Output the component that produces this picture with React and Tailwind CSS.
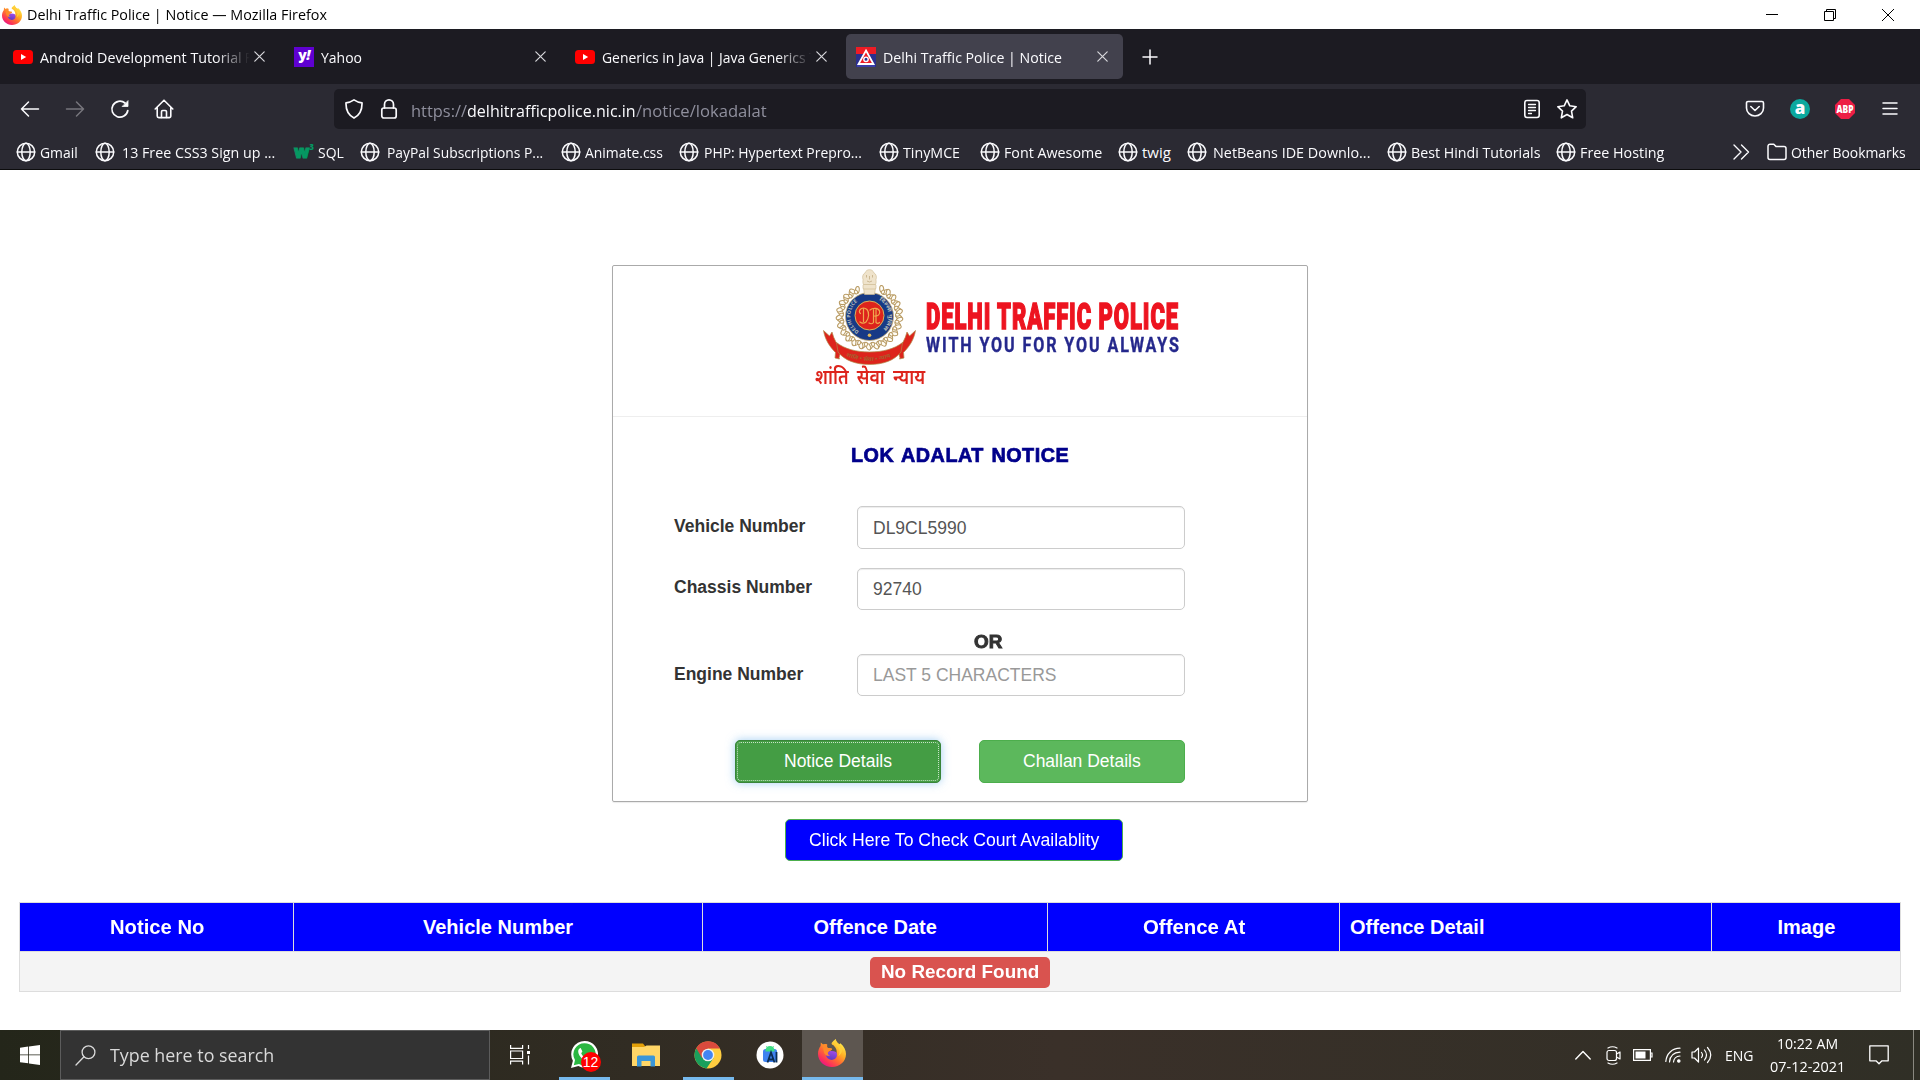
import { useLayoutEffect, useRef, useState } from "react";

const UI = "font-['Open_Sans','Noto_Sans',sans-serif]";
const ARIAL = "font-['Liberation_Sans',Arial,sans-serif]";

/* Single-line text condensed or widened to an exact width. */
function Fit({ w, className = "", children }) {
  const ref = useRef(null);
  const [scale, setScale] = useState(1);
  useLayoutEffect(() => {
    setScale(w / ref.current.offsetWidth);
  }, [w]);
  return (
    <span className={`block shrink-0 whitespace-nowrap text-left ${className}`} style={{ width: w }}>
      <span ref={ref} className="inline-block origin-left" style={{ transform: `scaleX(${scale})` }}>
        {children}
      </span>
    </span>
  );
}

const Stroke = ({ className = "size-5", sw = 1.5, vb = "0 0 20 20", children }) => (
  <svg className={`shrink-0 ${className}`} viewBox={vb} fill="none" stroke="currentColor" strokeWidth={sw} strokeLinecap="round" strokeLinejoin="round">
    {children}
  </svg>
);

const Firefox = ({ className, id }) => (
  <svg className={`shrink-0 ${className}`} viewBox="0 0 28 28">
    <defs>
      <linearGradient id={id + "a"} x1="0.85" y1="0.1" x2="0.2" y2="0.95">
        <stop offset="0" stopColor="#fff14f" />
        <stop offset="0.35" stopColor="#ffae24" />
        <stop offset="0.6" stopColor="#ff6a33" />
        <stop offset="0.85" stopColor="#fb2f5c" />
        <stop offset="1" stopColor="#e3168b" />
      </linearGradient>
      <linearGradient id={id + "b"} x1="0.6" y1="0" x2="0.3" y2="1">
        <stop offset="0" stopColor="#a04be8" />
        <stop offset="1" stopColor="#5b3bc4" />
      </linearGradient>
    </defs>
    <path fill={`url(#${id}a)`} d="M17.6 0c.6 2.700 2 4 3.600 5.200.6-.1 1-.4 1.200-.9C26.200 7.700 28 11.500 28 15c0 7.500-6.300 13-14 13S0 22.200 0 14.800c0-3.300 1.100-5.800 2.600-7.800l.2-3.400 2.300 2c1.300-.5 2.600-.7 3.800-.5-1 1.300-.8 2.600.5 3.900 1.500.3 4.300 0 4.800 1-.3 1.700-3.800 1.900-4.300 3.700 2.500-1.500 6.800-.6 8.600 1.400 1-5-1.600-7-3-8.800C11.300 4.700 15 2.500 17.600 0z" />
    <path d="M9.600 13.500c2.500-2.200 6-1.600 8.400-.4 1.600 1.800 1.300 5.300-1.200 7-3.300 1.800-7.500.3-8.400-2.800-.3-1.300.2-2.800 1.200-3.800z" fill={`url(#${id}b)`} />
    <path fill="#ff8a2a" d="M5.100 5.600c1.600-.5 3.100-.5 4.300.1-.6 1.300-.3 2.300.6 3.300 1.300.2 3.300.1 4 .8-.2 1.800-3.400 2-4.100 3.800-.4 1.600.6 2.700 2.400 3-2.600.9-5.200-.6-6.200-2.900-.9-2.600-.9-5.400-1-8.100z" />
    <path fill="#ffcf3a" d="M17.600 0c-1.600 3 .4 6 2.300 8 2.400 2.600 2.100 6.500.3 9 5-2.600 5-8.500 1-11.800C19.600 4 18.200 2.700 17.600 0z" />
  </svg>
);

const YouTube = () => (
  <svg className="size-5 shrink-0" viewBox="0 0 20 20">
    <rect y="3" width="20" height="14" rx="3.500" fill="#f00" />
    <path d="M8 7v6l5.200-3z" fill="#fff" />
  </svg>
);
const YahooIcon = () => (
  <span className={`flex h-5 w-5 shrink-0 items-center justify-center bg-[#5f01d1] text-[14px] leading-none font-extrabold text-white ${UI}`}>
    <span className="-mt-1 flex tracking-tighter">y<i>!</i></span>
  </span>
);
const PoliceIcon = () => (
  <svg className="size-5 shrink-0" viewBox="0 0 20 20">
    <rect width="20" height="20" fill="#2b2f8e" />
    <rect width="20" height="7" fill="#ee1c25" />
    <path d="M10 3.500 17.500 17h-15z" fill="#ee1c25" stroke="#fff" strokeWidth="1.800" />
    <circle cx="10" cy="12.300" r="2.200" fill="#2b2f8e" stroke="#fff" strokeWidth="1.400" />
    <rect x="1" y="18.500" width="18" height="1" fill="#4a4fc0" />
  </svg>
);
const CloseX = () => (
  <Stroke className="size-[11px] text-[#d8d8dc]" sw={1.2} vb="0 0 11 11">
    <path d="M.8.800l9.400 9.400M10.200.800L.8 10.200" />
  </Stroke>
);

const TABS = [
  { icon: <YouTube />, title: "Android Development Tutorial", w: 202, tail: "F" },
  { icon: <YahooIcon />, title: "Yahoo", w: 41 },
  { icon: <YouTube />, title: "Generics in Java | Java Generics", w: 204, tail: "T" },
  { icon: <PoliceIcon />, title: "Delhi Traffic Police | Notice", w: 179, active: true },
];

const Tab = ({ icon, title, w, tail, active }) => (
  <div className={`flex h-[45px] w-[277px] shrink-0 items-center rounded-[5px] pl-2.5 ${active ? "bg-[#42414d]" : ""}`}>
    {icon}
    <div className={`ml-[7px] flex w-[214px] items-center ${tail ? "mask-r-from-82% mask-r-to-98%" : ""}`}>
      <Fit w={w}>{title}</Fit>
      {tail && <Fit w={6} className="ml-[3px]">{tail}</Fit>}
    </div>
    <CloseX />
  </div>
);

const Globe = () => (
  <Stroke className="size-[20px]" sw={1.500}>
    <circle cx="10" cy="10" r="8.700" />
    <ellipse cx="10" cy="10" rx="4.200" ry="8.700" />
    <path d="M1.300 10h17.400" />
  </Stroke>
);
const W3 = () => (
  <span className={`relative flex h-5 w-5 shrink-0 items-center text-[17px] font-extrabold text-[#059862] ${UI}`}>
    <span className="[-webkit-text-stroke:1px_#059862]"><Fit w={15}>w</Fit></span>
    <span className="absolute -top-px right-0 text-[8px] leading-[12px]">3</span>
  </span>
);

const BOOKMARKS = [
  { t: "Gmail", w: 38, cell: "w-[79px]", gap: "ml-1" },
  { t: "13 Free CSS3 Sign up ...", w: 153, cell: "w-[199px]", gap: "ml-[7px]" },
  { t: "SQL", w: 26, cell: "w-[66px]", gap: "ml-1", w3: true },
  { t: "PayPal Subscriptions P...", w: 156, cell: "w-[201px]", gap: "ml-[7px]" },
  { t: "Animate.css", w: 78, cell: "w-[118px]", gap: "ml-1" },
  { t: "PHP: Hypertext Prepro...", w: 158, cell: "w-[200px]", gap: "ml-[5px]" },
  { t: "TinyMCE", w: 57, cell: "w-[101px]", gap: "ml-1" },
  { t: "Font Awesome", w: 98, cell: "w-[138px]", gap: "ml-1" },
  { t: "twig", w: 29, cell: "w-[69px]", gap: "ml-1" },
  { t: "NetBeans IDE Downlo...", w: 157, cell: "w-[200px]", gap: "ml-1.5" },
  { t: "Best Hindi Tutorials", w: 129, cell: "w-[169px]", gap: "ml-1" },
  { t: "Free Hosting", w: 84, cell: "w-[174px]", gap: "ml-1" },
];

const Browser = () => (
  <header className={`text-[15px] leading-5 ${UI}`}>
    <div className="flex h-[29px] items-center bg-white pl-0.5 text-black">
      <Firefox className="size-5" id="ft" />
      <Fit w={300} className="-mt-0.5 ml-[5px]">Delhi Traffic Police | Notice — Mozilla Firefox</Fit>
      <div className="ml-auto flex items-center gap-[46px] pr-[26px]">
        <svg className="h-3 w-3" viewBox="0 0 12 12" stroke="#000"><path d="M0 5.500h12" /></svg>
        <svg className="h-3 w-3" viewBox="0 0 12 12" fill="none" stroke="#000"><path d="M.5 2.500h9v9h-9zM2.500 2.500v-2h9v9h-2" /></svg>
        <svg className="h-3 w-3" viewBox="0 0 12 12" stroke="#000"><path d="M0 0l12 12M12 0L0 12" /></svg>
      </div>
    </div>

    <div className="flex h-[55px] items-center gap-1 bg-[#1c1b22] pl-[3px] text-[#fbfbfe]">
      {TABS.map((t) => <Tab key={t.title} {...t} />)}
      <Stroke className="ml-[15px] size-4" sw={1.500} vb="0 0 16 16"><path d="M8 1v14M1 8h14" /></Stroke>
    </div>

    <div className="flex h-[50px] items-center bg-[#2b2a33] pl-5 text-[#fbfbfe]">
      <Stroke><path d="M18.500 10H1.500M8.500 3L1.500 10l7 7" /></Stroke>
      <Stroke className="ml-[25px] size-5 text-[#77767d]"><path d="M1.500 10h17M11.500 3l7 7-7 7" /></Stroke>
      <Stroke className="ml-[25px] size-5" sw={1.700}>
        <path d="M17.800 11.500A8 8 0 1 1 15 4" />
        <path d="M18 2v5.500h-5.500z" fill="currentColor" strokeWidth="0.800" />
      </Stroke>
      <Stroke className="ml-[24px] size-5" sw={1.600}>
        <path d="M1.200 10 10 1.200 18.800 10M3.200 8.500V17a1.600 1.600 0 0 0 1.600 1.600h10.400a1.600 1.600 0 0 0 1.600-1.600V8.500" />
        <path d="M7.500 18.500v-5.800a1.200 1.200 0 0 1 1.200-1.200h2.600a1.200 1.200 0 0 1 1.200 1.200v5.800" />
      </Stroke>
      <div className="ml-[160px] flex h-10 w-[1252px] items-center rounded-[5px] bg-[#1c1b22] pl-2.5">
        <Stroke sw={1.700}><path d="M10 .900c2.500 1.700 5 2.700 8 3C18.200 10 16 16 10 19.100 4 16 1.800 10 2 3.900c3-.3 5.500-1.300 8-3z" /></Stroke>
        <Stroke className="ml-[15px] size-5" sw={1.700}>
          <rect x="2.800" y="9" width="14.400" height="10" rx="2" />
          <path d="M5.500 9V5.400a4.500 4.500 0 0 1 9 0V9" />
        </Stroke>
        <div className="mt-[3px] ml-3 flex text-[17px]">
          <Fit w={56} className="text-[#8f8f9d]">https://</Fit>
          <Fit w={169}>delhitrafficpolice.nic.in</Fit>
          <Fit w={131} className="text-[#8f8f9d]">/notice/lokadalat</Fit>
        </div>
        <Stroke className="ml-[755px] size-5" sw={1.600}>
          <rect x="2.800" y="1.500" width="14.400" height="17" rx="2.200" />
          <path d="M6.500 5.500h7M6.500 8.500h7M6.500 11.500h7M6.500 14.500h3" strokeWidth="1.300" />
        </Stroke>
        <Stroke className="ml-[15px] size-5" sw={1.600}>
          <path d="M10 .900l2.800 5.900 6.400.9-4.700 4.400 1.200 6.700L10 15.500l-5.700 3.300 1.200-6.700L.8 7.700l6.400-.9z" />
        </Stroke>
      </div>
      <Stroke className="ml-[159px] size-5" sw={1.600}>
        <path d="M3 2.500h14a1.500 1.500 0 0 1 1.500 1.500v5a8.500 8 0 0 1-17 0V4A1.500 1.500 0 0 1 3 2.500zM5.800 7.500l4.200 4 4.200-4" />
      </Stroke>
      <span className={`ml-[25px] flex size-5 items-center justify-center rounded-full bg-[#0aa89e] pb-0.5 text-[17px] font-extrabold ${UI}`}>a</span>
      <svg className="ml-[25px] size-5" viewBox="0 0 20 20">
        <path d="M6 0h8l6 6v8l-6 6H6l-6-6V6z" fill="#ed1e45" />
        <text x="10" y="13.800" textAnchor="middle" textLength="17" lengthAdjust="spacingAndGlyphs" fontSize="10.500" fontWeight="800" fill="#fff" fontFamily="Open Sans">ABP</text>
      </svg>
      <Stroke className="ml-[25px] size-5"><path d="M3 4h14M3 9.500h14M3 15h14" /></Stroke>
    </div>

    <div className="flex h-9 items-center border-b border-[#0c0c0d] bg-[#2b2a33] pl-4 text-[#fbfbfe]">
      {BOOKMARKS.map((b) => (
        <div key={b.t} className={`flex shrink-0 items-center ${b.cell}`}>
          {b.w3 ? <W3 /> : <Globe />}
          <Fit w={b.w} className={b.gap}>{b.t}</Fit>
        </div>
      ))}
      <Stroke className="ml-px size-5" sw={1.400}><path d="M3 3l7 7-7 7M10.500 3l7 7-7 7" /></Stroke>
      <Stroke className="ml-4 size-[20px]" sw={1.500}>
        <path d="M1 4.200A2 2 0 0 1 3 2.200h3.800l2.400 2.400H17a2 2 0 0 1 2 2v9a2 2 0 0 1-2 2H3a2 2 0 0 1-2-2z" />
      </Stroke>
      <Fit w={115} className="ml-1">Other Bookmarks</Fit>
    </div>
  </header>
);

const LEAVES = Array.from({ length: 25 }, (_, i) => i * 14.4 - 90);

const Emblem = () => (
  <svg className="h-[98px] w-[111px]" viewBox="815 268 111 98">
    {LEAVES.map((a, i) => {
      const r = a * (Math.PI / 180);
      if (Math.sin(r) < -0.95) return null;
      const x = 869.5 + 29.5 * Math.cos(r);
      const y = 316.500 + 29.500 * Math.sin(r);
      return (
        <g key={i} transform={`translate(${x} ${y}) rotate(${a})`} fill="#fffdf6" stroke="#b89a62" strokeWidth="1">
          <ellipse cx="2" cy="-1.800" rx="3.400" ry="2" transform="rotate(-35)" />
          <ellipse cx="1" cy="2" rx="3.400" ry="1.900" transform="rotate(35)" />
          <ellipse cx="-1.500" cy="0" rx="2" ry="1.500" />
        </g>
      );
    })}
    <circle cx="869.500" cy="316.500" r="24" fill="#173a86" stroke="#c9ae74" strokeWidth="0.800" />
    <circle cx="869.500" cy="315.500" r="14.500" fill="#dd241c" stroke="#d8b45c" strokeWidth="1" />
    <path id="ringL" d="M859 331.500A18.200 18.200 0 0 1 860 300" fill="none" />
    <path id="ringR" d="M879 300A18.200 18.200 0 0 1 880 331.500" fill="none" />
    <text fontSize="5" fontWeight="700" fill="#b9bdb8" fontFamily="Open Sans">
      <textPath href="#ringL" textLength="35" lengthAdjust="spacingAndGlyphs">DELHI POLICE</textPath>
    </text>
    <text fontSize="5" fontWeight="700" fill="#b9bdb8" fontFamily="Noto Sans">
      <textPath href="#ringR" textLength="34" lengthAdjust="spacingAndGlyphs">दिल्ली पुलिस</textPath>
    </text>
    <circle cx="869.500" cy="335.300" r="1.800" fill="#e0b95a" />
    <g fill="none" stroke="#f0a94e" strokeWidth="1.200" strokeLinecap="round">
      <path d="M860 309.500c2-2 5-2 7 0 2.500 3 2 9-1 12.500-2 1.500-4.500 1.300-6 0M863.500 309v12.500M860.500 313.500c-1.500-1-1.500-3 0-4" />
      <path d="M870 310c3-2.500 8.500-2 9.500 1 1 3-1.500 5.500-5 5M873.500 309.500v13c-1 1.500-3 1.500-4.500.5M876 309.500v13c1 1 2.500 1 3.500 0" />
    </g>
    <g fill="#efe3cb" stroke="#cdb88f" strokeWidth="0.600">
      <path d="M863.500 288h12l-1 6.500h-10z" />
      <rect x="863" y="284.500" width="13" height="4.500" rx="1" />
      <path d="M863.500 284.500c-1-2-.5-3.500-.5-5-1-2.500-.2-5.500 2-6.500 1-2.500 2.500-3.300 4.500-3.300s3.500.8 4.500 3.300c2.200 1 3 4 2 6.500 0 1.500.5 3-.5 5z" />
      <path d="M866.500 275v2.500M872.500 275v2.500M867 281q2.500 2 5 0M869.500 276v3.500" fill="none" stroke="#b39a6c" />
    </g>
    <g fill="#dd241c" stroke="#b08b4a" strokeWidth="0.700">
      <path d="M823.500 330.500l6 5.500 2.500-4c2 7.500 5 13 9.500 17l-2.500 9 .5 1-4.500-1 .5-5.500c-6-6-10.500-13-12-22z" />
      <path d="M915.500 330.500l-6 5.500-2.500-4c-2 7.500-5 13-9.500 17l2.500 9-.5 1 4.500-1-.5-5.500c6-6 10.500-13 12-22z" />
      <path d="M836.500 342.500c8 6.500 20 9.500 33 9.500s25-3 33-9.500l-1.500 9.500c-6.500 8.500-18 12.500-31.500 12.500s-25-4-31.500-12.500z" />
    </g>
    <path id="rib" d="M846 356q23.500 10 47 0" fill="none" />
    <text fontSize="5.500" fontWeight="700" fill="#a8602f" fontFamily="Noto Sans">
      <textPath href="#rib" textLength="46" lengthAdjust="spacingAndGlyphs">शांति • सेवा • न्याय</textPath>
    </text>
  </svg>
);

const Field = ({ label, lw, value, vw, placeholder, h, lm = "mt-2" }) => (
  <div className={`flex ${h}`}>
    <Fit w={lw} className={`font-bold ${lm}`}>{label}</Fit>
    <div className="grow" />
    <div className={`flex w-[328px] items-center rounded-[5px] border border-[#ccc] bg-white pt-px pl-[15px] shadow-[inset_0_1px_1px_rgba(0,0,0,0.075)] ${placeholder ? "text-[#999]" : "text-[#555]"}`}>
      <Fit w={vw}>{value}</Fit>
    </div>
  </div>
);

const HEAD = [
  ["Notice No", 94, "w-[274px] justify-center"],
  ["Vehicle Number", 150, "w-[409px] justify-center"],
  ["Offence Date", 123, "w-[345px] justify-center"],
  ["Offence At", 102, "w-[292px] justify-center"],
  ["Offence Detail", 134, "w-[372px] pl-2.5"],
  ["Image", 58, "w-[189px] justify-center"],
];

const Page = () => (
  <main className={`flex h-[860px] flex-col items-center bg-white pt-[95px] text-[17.5px] leading-[25px] text-[#333] ${ARIAL}`}>
    <section className="flex h-[537px] w-[696px] flex-col rounded-[2px] border border-[#aaa] shadow-[0_1px_1px_rgba(0,0,0,0.08)]">
      <div className="flex h-[151px] border-b border-[#eee] pt-0.5 pl-[202px]">
        <div className="w-[111px] text-[20px] leading-[22px] font-semibold text-[#dd241c]">
          <Emblem />
          <Fit w={110} className="font-['Noto_Sans',sans-serif]"><span className="[word-spacing:4px]">शांति सेवा न्याय</span></Fit>
        </div>
        <div className="pt-[31px]">
          <Fit w={253} className="font-[Roboto,sans-serif] text-[36px] leading-9 font-black tracking-[1.500px] text-[#ed1420] [-webkit-text-stroke:1.500px_#ed1420]">DELHI TRAFFIC POLICE</Fit>
          <Fit w={255} className="-mt-1 font-[Roboto,sans-serif] text-[21px] leading-7 font-bold tracking-[2.500px] text-[#25288c] [-webkit-text-stroke:0.400px_#25288c]">WITH YOU FOR YOU ALWAYS</Fit>
        </div>
      </div>

      <div className="mt-[26px] flex justify-center text-[19.500px] font-bold text-[#00008b] [-webkit-text-stroke:0.700px_#00008b]">
        <Fit w={218}><span className="tracking-[0.500px] [word-spacing:1.500px]">LOK ADALAT NOTICE</span></Fit>
      </div>

      <div className="mt-[38px] flex flex-col pr-[122px] pl-[61px]">
        <Field label="Vehicle Number" lw={131} value="DL9CL5990" vw={93} h="h-[43px]" />
        <div className="h-[19px]" />
        <Field label="Chassis Number" lw={138} value="92740" vw={49} h="h-[42px]" lm="mt-[7px]" />
        <div className="flex h-11 items-end pl-[300px] [-webkit-text-stroke:0.900px_#333]">
          <Fit w={28} className="-mb-px font-bold">OR</Fit>
        </div>
        <Field label="Engine Number" lw={129} value="LAST 5 CHARACTERS" vw={183} placeholder h="h-[42px]" />
      </div>

      <div className="mt-[44px] flex justify-between pr-[122px] pl-[122px] text-white">
        <button className="flex h-[43px] w-[206px] items-center justify-center rounded-[5px] border border-[#398439] bg-[#449d44] p-px shadow-[0_0_10px_rgba(102,175,233,0.6)]">
          <span className="flex h-full w-full items-center justify-center rounded-[4px] border border-dotted border-white/70"><Fit w={108}>Notice Details</Fit></span>
        </button>
        <button className="flex h-[43px] w-[206px] items-center justify-center rounded-[5px] border border-[#4cae4c] bg-[#5cb85c]">
          <Fit w={118}>Challan Details</Fit>
        </button>
      </div>
    </section>

    <button className="mt-[17px] mr-3 flex h-[42px] w-[338px] shrink-0 items-center justify-center rounded-[5px] border border-[#4cae4c] bg-[#0000ff] text-white">
      <Fit w={290}>Click Here To Check Court Availablity</Fit>
    </button>

    <div className="mt-[41px] w-[1882px] border border-[#ddd]">
      <div className="flex h-12 bg-[#0000ff] text-[20px] font-bold text-white">
        {HEAD.map(([t, w, cls], i) => (
          <div key={t} className={`flex shrink-0 items-center ${cls} ${i < 5 ? "border-r border-[#ddd]" : ""}`}>
            <Fit w={w}>{t}</Fit>
          </div>
        ))}
      </div>
      <div className="flex h-10 items-center justify-center border-t border-[#ddd] bg-[#f4f4f4]">
        <span className="mt-px flex h-[31px] w-[180px] items-center justify-center rounded-[5px] bg-[#d9534f] pb-0.5 text-[18.500px] font-bold text-white">
          <Fit w={158}>No Record Found</Fit>
        </span>
      </div>
    </div>
  </main>
);

const AppSlot = ({ className = "", open, children }) => (
  <div className={`flex h-[50px] shrink-0 flex-col items-center justify-end ${className}`}>
    <div className="flex grow items-center pt-0.5 pr-0.5">{children}</div>
    <div className={`h-[3px] w-full ${open ? "bg-[#76b9ed]" : ""}`} />
  </div>
);

const Taskbar = () => (
  <footer className={`flex h-[50px] items-center bg-linear-to-r from-[#24261a] via-[#3a3029] via-55% to-[#302f26] text-[15px] text-white ${UI}`}>
    <svg className="ml-5 size-5 shrink-0" viewBox="0 0 20 20" fill="#fff">
      <path d="M0 2.700L8.200 1.500v7.900H0zM9 1.400L20 0v9.400H9zM0 10.300h8.200v8L0 17.200zM9 10.300h11V20L9 18.500z" />
    </svg>
    <div className="ml-5 flex h-[50px] w-[430px] shrink-0 items-center border border-[#5c5c5c] bg-[#333] pl-[14px] text-[#dadada]">
      <Stroke className="size-[21px]" sw={1.300} vb="0 0 21 21"><circle cx="13.500" cy="7.200" r="6.400" /><path d="M9 11.800L1 20" /></Stroke>
      <Fit w={164} className="ml-[14px] text-[18.500px] leading-6">Type here to search</Fit>
    </div>
    <svg className="ml-5 size-5 shrink-0" viewBox="0 0 20 20" fill="none" stroke="#fff" strokeWidth="1.200">
      <path d="M.6 0v3.400h12V0M.6 19.500v-3.400h12v3.400M.6 6h12v7.500H.6zM18.500 0v4M18.500 10.500v9" />
      <path d="M17 6h3v3h-3z" fill="#fff" stroke="none" />
    </svg>
    <AppSlot className="ml-[29px] w-[51px]" open>
      <div className="relative ml-px h-[27px] w-[27px]">
        <svg className="size-[27px]" viewBox="0 0 27 27">
          <path d="M13.500 0a13.300 13.300 0 0 0-11.600 19.800L0 27l7.400-2A13.300 13.300 0 1 0 13.500 0z" fill="#fff" />
          <path d="M13.500 2.200A11.100 11.100 0 0 0 4 19l-1.200 5.200L8 22.900A11.100 11.100 0 1 0 13.500 2.200z" fill="#2bb741" />
          <path d="M9.700 7c-.6-.1-2.700 1-2.500 3.700.4 4.500 5.700 9.600 9.800 9.600 2.300 0 3.600-1.600 3.400-3.200l-3.300-1.800-1.700 1.900c-2.500-.9-4.200-2.700-5.200-5l1.200-1.600z" fill="#fff" />
        </svg>
        <span className={`absolute top-[11px] left-[10px] flex size-5 items-center justify-center rounded-full bg-[#f00] text-[14px] ${ARIAL}`}>12</span>
      </div>
    </AppSlot>
    <AppSlot className="ml-[11px] w-[51px]">
      <svg className="h-7 w-7" viewBox="0 0 28 28">
        <path d="M0 2.500h11l2 2.500v4H0z" fill="#e3a008" />
        <path d="M0 6h12l2.500-1.500H28V25H0z" fill="#ffd667" />
        <path d="M5 25V16A1.500 1.500 0 0 1 6.500 14.500h15a1.500 1.500 0 0 1 1.500 1.500V25.500h-4.500V20h-9v5.500H5z" fill="#3a96d8" />
      </svg>
    </AppSlot>
    <AppSlot className="ml-[11px] w-[51px]" open>
      <svg className="size-7" viewBox="0 0 28 28">
        <circle cx="14" cy="14" r="13.500" fill="#ffcd40" />
        <path d="M14 14 2.300 7.200A13.500 13.500 0 0 0 12.500 27.400L19.500 17z" fill="#1a9f5c" />
        <path d="M14 7.500h12A13.500 13.500 0 0 0 2.300 7.200L8 17z" fill="#db4a3d" />
        <circle cx="14" cy="14" r="6.300" fill="#f1f1f1" />
        <circle cx="14" cy="14" r="4.900" fill="#4285f4" />
      </svg>
    </AppSlot>
    <AppSlot className="ml-[11px] w-[51px]">
      <svg className="size-7" viewBox="0 0 28 28">
        <circle cx="14" cy="14" r="13.500" fill="#fff" />
        <rect x="7" y="8" width="14" height="13" rx="2.500" fill="#3f82f0" />
        <path d="M9.500 9.500a4.500 4.500 0 0 1 9 0v1h-9z" fill="#3ddc84" />
        <path d="M10.500 5.200l1.500 2M17.500 5.200l-1.500 2" stroke="#3ddc84" />
        <path d="M11.500 21.500l3.500-10 3.500 10M12.500 18.500h5M20.500 11v10.500" stroke="#0b2d52" strokeWidth="1.800" fill="none" />
      </svg>
    </AppSlot>
    <AppSlot className="ml-[6px] w-[61px] bg-[#5d5650]" open>
      <Firefox className="mb-1 size-7" id="fb" />
    </AppSlot>

    <div className="ml-auto flex shrink-0 items-center">
      <Stroke className="h-[10px] w-4" sw={1.400} vb="0 0 16 10"><path d="M.8 9L8 1.500 15.200 9" /></Stroke>
      <Stroke className="ml-[15px] h-[19px] w-4" sw={1.200} vb="0 0 16 19">
        <rect x="1" y="4.500" width="9.500" height="10" rx="2" />
        <path d="M10.500 8l3.500-2v7l-3.500-2M2 2q4.500-2.500 9 0M2 17q4.500 2.500 9 0" />
      </Stroke>
      <svg className="ml-[11px] h-3 w-5" viewBox="0 0 20 12"><path d="M.6.600h16.800v10.800H.6zM17.500 4h1.500v4h-1.500" fill="none" stroke="#fff" strokeWidth="1.200" /><path d="M2.500 2.500h10v7h-10z" fill="#fff" /></svg>
      <Stroke className="ml-[12px] size-4" sw={1.200} vb="0 0 16 16">
        <path d="M.8 14.500C1.500 6.500 7 1.500 15 1.200M4.500 15c.5-6 4.500-9.500 10.500-9.800M8.500 15c.3-3.500 2.700-5.700 6.500-6" />
        <circle cx="13.800" cy="14" r="1.200" fill="#fff" />
      </Stroke>
      <Stroke className="ml-[10px] h-[18px] w-[21px]" sw={1.200} vb="0 0 21 18">
        <path d="M1 6v6h2.500L7.500 16V2L3.500 6zM10.500 6.500q2 2.500 0 5M13.500 4q4 5 0 10M16.500 1.500q6.500 7.500 0 15" />
      </Stroke>
      <Fit w={29} className="ml-[13px]">ENG</Fit>
      <div className="ml-[15px] flex w-[76px] flex-col items-center pb-px leading-[23px]">
        <Fit w={61}>10:22 AM</Fit>
        <Fit w={75}>07-12-2021</Fit>
      </div>
      <Stroke className="ml-[24px] h-5 w-5" sw={1.300}><path d="M.8.800h18.400v15H13l-3 3-3-3H.8z" /></Stroke>
      <div className="ml-[24px] h-[50px] w-px bg-[#8a8880]" />
      <div className="w-1.5" />
    </div>
  </footer>
);

export default function App() {
  return (
    <div className="flex h-[1080px] w-[1920px] flex-col overflow-hidden bg-white">
      <Browser />
      <Page />
      <Taskbar />
    </div>
  );
}
